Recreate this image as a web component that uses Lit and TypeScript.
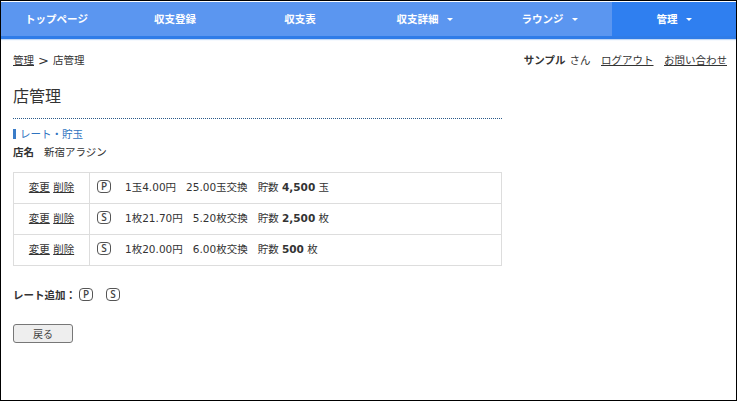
import { LitElement, html, css } from "lit";
import { customElement } from "lit/decorators.js";

const rows = [
  { k: "P", a: "1玉4.00円", b: "25.00玉交換", n: "4,500", u: "玉" },
  { k: "S", a: "1枚21.70円", b: "5.20枚交換", n: "2,500", u: "枚" },
  { k: "S", a: "1枚20.00円", b: "6.00枚交換", n: "500", u: "枚" },
];

@customElement("app-root")
export class AppRoot extends LitElement {
  static styles = css`
    :host {
      display: block;
      box-sizing: border-box;
      width: 737px;
      height: 401px;
      border: 1px solid #000;
      background: #fff;
      color: #333;
      font-family: "DejaVu Sans", "Noto Sans CJK JP", sans-serif;
      font-size: 10.5px;
      overflow: hidden;
    }
    a { color: #333; text-decoration: underline; }
    nav {
      display: grid;
      grid-template-columns: 111px 126px 124px 125px 125px 1fr;
      height: 34px;
      margin-top: 1px;
      background: #5b96f0;
      border-bottom: 3px solid #2f7ce8;
      box-shadow: 0 1px 1px #c4d9f5;
      color: #fff;
      font-weight: 700;
    }
    .item { display: flex; align-items: center; justify-content: center; gap: 8px; padding-bottom: 2px; }
    .item.active { background: #2f7ff0; }
    .caret { width: 0; height: 0; margin-top: 2px; border: 3px solid transparent; border-top: 3px solid #fff; border-bottom: 0; }
    .top { display: flex; justify-content: space-between; padding: 14px 9px 0 12px; height: 15px; line-height: 15px; }
    .crumb { display: flex; gap: 4px; }
    .gt { font-size: 13px; }
    .user { display: flex; gap: 10.5px; }
    .user b { margin-right: 4px; }
    h1 { margin: 18px 0 0 12px; font-size: 16px; font-weight: 400; line-height: 22px; }
    .main { width: 489px; margin-left: 12px; }
    .rule { border-top: 1px dotted #2a5a8a; margin-top: 10px; }
    .sec { margin-top: 8px; height: 14px; line-height: 14px; display: flex; align-items: center; gap: 4px; color: #2f74c0; }
    .bar { width: 3px; height: 10px; background: #3a7cc8; }
    .shop { margin-top: 4px; line-height: 15px; display: flex; gap: 10px; }
    table { border-collapse: collapse; width: 489px; margin-top: 12px; }
    td { border: 1px solid #ddd; height: 26px; padding: 0 0 4px; }
    td.ops { width: 75px; text-align: center; }
    td.info { padding-left: 7px; }
    .line { display: flex; align-items: center; }
    .a { margin-left: 14px; }
    .b { margin-left: 10px; }
    .c { margin-left: 10px; }
    .badge {
      display: inline-flex; align-items: center; justify-content: center;
      box-sizing: border-box; width: 14px; height: 13px;
      border: 1px solid #555; border-radius: 4px;
      font-family: "Open Sans", sans-serif; font-size: 10px; font-weight: 600; color: #444;
    }
    .add { margin-top: 20px; height: 16px; display: flex; align-items: center; font-weight: 700; }
    .add .badge { margin-left: 3px; }
    .add .badge + .badge { margin-left: 13px; }
    button {
      display: block; margin-top: 22px; width: 60px; height: 19px; padding: 0;
      background: #eee; border: 1px solid #777; border-radius: 3px;
      font: inherit; font-size: 10px; color: #444;
    }
  `;

  render() {
    return html`
      <nav>
        <div class="item">トップページ</div>
        <div class="item">収支登録</div>
        <div class="item">収支表</div>
        <div class="item">収支詳細<span class="caret"></span></div>
        <div class="item">ラウンジ<span class="caret"></span></div>
        <div class="item active">管理<span class="caret"></span></div>
      </nav>
      <div class="top">
        <div class="crumb"><a href="#">管理</a><span class="gt">&gt;</span><span>店管理</span></div>
        <div class="user">
          <span><b>サンプル</b>さん</span><a href="#">ログアウト</a><a href="#">お問い合わせ</a>
        </div>
      </div>
      <h1>店管理</h1>
      <div class="main">
        <div class="rule"></div>
        <div class="sec"><span class="bar"></span>レート・貯玉</div>
        <div class="shop"><b>店名</b><span>新宿アラジン</span></div>
        <table>
          ${rows.map(
            (r) => html`<tr>
              <td class="ops"><a href="#">変更</a> <a href="#">削除</a></td>
              <td class="info">
                <div class="line">
                  <span class="badge">${r.k}</span>
                  <span class="a">${r.a}</span>
                  <span class="b">${r.b}</span>
                  <span class="c">貯数 <b>${r.n}</b> ${r.u}</span>
                </div>
              </td>
            </tr>`
          )}
        </table>
        <div class="add">レート追加：<span class="badge">P</span><span class="badge">S</span></div>
        <button>戻る</button>
      </div>
    `;
  }
}
